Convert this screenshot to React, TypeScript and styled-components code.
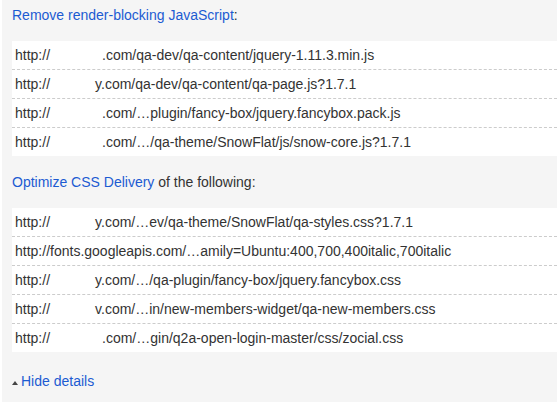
import React from 'react'
import styled, { createGlobalStyle } from 'styled-components'

const GlobalStyle = createGlobalStyle`
  html, body {
    margin: 0;
    padding: 0;
    background: #fff;
  }
  body {
    font-family: "Liberation Sans", Arial, sans-serif;
    font-size: 14px;
    color: #333;
  }
`

type Url = { pre: string; hide: number; post: string }

const scripts: Url[] = [
  { pre: 'http://', hide: 52, post: '.com/qa-dev/qa-content/jquery-1.11.3.min.js' },
  { pre: 'http://', hide: 45, post: 'y.com/qa-dev/qa-content/qa-page.js?1.7.1' },
  { pre: 'http://', hide: 52, post: '.com/…plugin/fancy-box/jquery.fancybox.pack.js' },
  { pre: 'http://', hide: 52, post: '.com/…/qa-theme/SnowFlat/js/snow-core.js?1.7.1' },
]

const styles: Url[] = [
  { pre: 'http://', hide: 45, post: 'y.com/…ev/qa-theme/SnowFlat/qa-styles.css?1.7.1' },
  { pre: 'http://', hide: 0, post: 'fonts.googleapis.com/…amily=Ubuntu:400,700,400italic,700italic' },
  { pre: 'http://', hide: 45, post: 'y.com/…/qa-plugin/fancy-box/jquery.fancybox.css' },
  { pre: 'http://', hide: 45, post: 'v.com/…in/new-members-widget/qa-new-members.css' },
  { pre: 'http://', hide: 52, post: '.com/…gin/q2a-open-login-master/css/zocial.css' },
]

const UrlList = ({ items }: { items: Url[] }) => (
  <List>
    {items.map((u, i) => (
      <Row key={i}>
        {u.pre}
        {u.hide > 0 && <Masked $w={u.hide}>domain</Masked>}
        {u.post}
      </Row>
    ))}
  </List>
)

const App = () => {
  return (
    <>
      <GlobalStyle />
      <Panel>
        <Heading>
          <Link>Remove render-blocking JavaScript</Link>:
        </Heading>
        <UrlList items={scripts} />

        <Heading>
          <Link>Optimize CSS Delivery</Link> of the following:
        </Heading>
        <UrlList items={styles} />

        <Toggle>
          <Arrow />
          <Link>Hide details</Link>
        </Toggle>
      </Panel>
    </>
  )
}

export default App

const Panel = styled.div`
  margin-left: 2px;
  background: #f5f5f5;
  padding: 6px 0 12px 10px;
`
const Heading = styled.div`
  line-height: 18px;
  margin: 0 0 17px;
  color: #333;
  & + div {
    margin-bottom: 17px;
  }
`
const Link = styled.a`
  color: #1c5bd2;
  text-decoration: none;
  cursor: pointer;
`
const List = styled.div`
  background: #fff;
  display: flex;
  flex-direction: column;
`
const Row = styled.div`
  height: 28px;
  line-height: 28px;
  padding-left: 3px;
  white-space: nowrap;
  overflow: hidden;
  color: #333;
  border-bottom: 1px dashed #ccc;
  &:last-child {
    border-bottom: none;
  }
`
const Masked = styled.span<{ $w: number }>`
  display: inline-block;
  width: ${p => p.$w}px;
  overflow: hidden;
  color: transparent;
  vertical-align: top;
`
const Toggle = styled.div`
  display: flex;
  align-items: center;
  margin-top: 20px;
  line-height: 18px;
`
const Arrow = styled.span`
  width: 0;
  height: 0;
  border-left: 3px solid transparent;
  border-right: 3px solid transparent;
  border-bottom: 4px solid #444;
  margin: 4px 3px 0 0;
`
